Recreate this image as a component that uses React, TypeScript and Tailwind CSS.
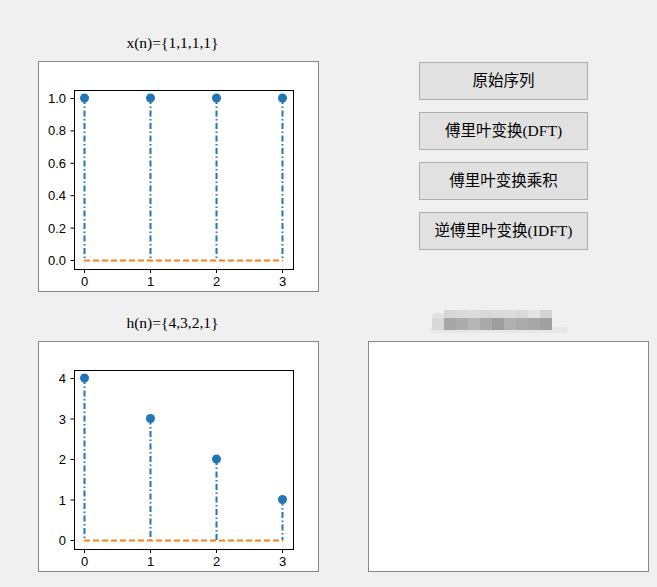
import React from 'react';

type PlotProps = {
    values: number[];
    yTicks: { v: number; label: string }[];
    yMax: number;
};

const BLUE = '#1f77b4';
const ORANGE = '#ff7f0e';

// axes box inside the frame (inner coordinates)
const AX = { l: 35, r: 254, t: 28, b: 207 };
const xPos = (i: number) => 45 + i * 66;

const StemPlot: React.FC<PlotProps> = ({ values, yTicks, yMax }) => {
    const yPos = (v: number) => 198 - (v / yMax) * 162;

    return (
        <svg width="279" height="229" className="block">
            <rect x={AX.l + 0.5} y={AX.t + 0.5} width={AX.r - AX.l} height={AX.b - AX.t} fill="none" stroke="#000" strokeWidth="1" />
            {yTicks.map((t) => (
                <g key={t.label}>
                    <line x1={AX.l - 3.5} x2={AX.l} y1={yPos(t.v) + 0.5} y2={yPos(t.v) + 0.5} stroke="#000" strokeWidth="1" />
                    <text
                        x={AX.l - 8}
                        y={yPos(t.v) + 5}
                        textAnchor="end"
                        fontSize="13"
                        fontFamily="'Liberation Sans', Arial, sans-serif"
                        fill="#000"
                    >
                        {t.label}
                    </text>
                </g>
            ))}
            {values.map((_, i) => (
                <g key={i}>
                    <line x1={xPos(i) + 0.5} x2={xPos(i) + 0.5} y1={AX.b + 0.5} y2={AX.b + 4} stroke="#000" strokeWidth="1" />
                    <text
                        x={xPos(i) + 0.5}
                        y={AX.b + 17}
                        textAnchor="middle"
                        fontSize="13"
                        fontFamily="'Liberation Sans', Arial, sans-serif"
                        fill="#000"
                    >
                        {i}
                    </text>
                </g>
            ))}
            {values.map((v, i) => (
                <line
                    key={'s' + i}
                    x1={xPos(i) + 0.5}
                    x2={xPos(i) + 0.5}
                    y1={yPos(v)}
                    y2={yPos(0)}
                    stroke={BLUE}
                    strokeWidth="2"
                    strokeDasharray="6 2.5 1.5 2.5"
                />
            ))}
            <line x1={xPos(0)} x2={xPos(3) + 1} y1={yPos(0) + 0.5} y2={yPos(0) + 0.5} stroke={ORANGE} strokeWidth="2" strokeDasharray="6 3" />
            {values.map((v, i) => (
                <circle key={'m' + i} cx={xPos(i) + 0.5} cy={yPos(v)} r="4.5" fill={BLUE} />
            ))}
        </svg>
    );
};

const Frame: React.FC<{ children?: React.ReactNode }> = ({ children }) => (
    <div className="w-[281px] h-[231px] border border-[#828790] bg-white">{children}</div>
);

const Title: React.FC<{ text: string }> = ({ text }) => (
    <div className="h-[16px] leading-[16px] pr-[12px] text-center text-[15.5px] text-black font-['Liberation_Serif',serif] mb-[10px]">{text}</div>
);

const buttons = ['原始序列', '傅里叶变换(DFT)', '傅里叶变换乘积', '逆傅里叶变换(IDFT)'];

const topShades = ['#d6d6d6', '#d9d9d9', '#dcdcdc', '#d8d8d8', '#dadada', '#dcdcdc', '#d9d9d9', '#e4e4e4', '#d4d4d4'];
const bottomShades = ['#a6a6a6', '#acacac', '#b6b6b6', '#a9a9a9', '#9e9e9e', '#b0b0b0', '#ababab', '#a7a7a7', '#a0a0a0'];

const BlurredTitle: React.FC = () => (
    <div className="relative h-[20px] w-[140px] ml-[64px] mt-[-5px] mb-[11px]">
        <div className="absolute left-[-2px] top-[17px] w-[138px] h-[6px] rounded-full bg-[#e7e7e9]" />
        <div className="absolute left-0 top-[3px] w-[12px] h-[17px] bg-[#e2e2e2] rounded-l-[4px]" />
        <div className="absolute left-0 top-[8px] w-[12px] h-[12px] bg-[#d8d8d8]" />
        <div className="relative ml-[12px] flex flex-col">
            <div className="flex">
                {topShades.map((c, i) => (
                    <div key={i} className="w-[12px] h-[8px]" style={{ background: c }} />
                ))}
            </div>
            <div className="flex">
                {bottomShades.map((c, i) => (
                    <div key={i} className="w-[12px] h-[12px]" style={{ background: c }} />
                ))}
            </div>
        </div>
    </div>
);

const App: React.FC = () => {
    return (
        <div className="w-[657px] h-[587px] bg-[#f0f0f0] pl-[38px] pt-[35px] overflow-hidden">
            <div className="flex gap-[49px]">
                <div className="flex flex-col">
                    <Title text="x(n)={1,1,1,1}" />
                    <Frame>
                        <StemPlot
                            values={[1, 1, 1, 1]}
                            yMax={1}
                            yTicks={[0, 0.2, 0.4, 0.6, 0.8, 1].map((v) => ({ v, label: v.toFixed(1) }))}
                        />
                    </Frame>
                </div>
                <div className="flex flex-col gap-[12px] pt-[27px] pl-[51px]">
                    {buttons.map((b) => (
                        <button
                            key={b}
                            className="w-[169px] h-[38px] border border-[#adadad] bg-[#e1e1e1] text-black text-[15.5px] font-['Liberation_Serif','Noto_Sans_CJK_SC',serif]"
                        >
                            {b}
                        </button>
                    ))}
                </div>
            </div>
            <div className="flex gap-[49px] mt-[23px]">
                <div className="flex flex-col">
                    <Title text="h(n)={4,3,2,1}" />
                    <Frame>
                        <StemPlot
                            values={[4, 3, 2, 1]}
                            yMax={4}
                            yTicks={[0, 1, 2, 3, 4].map((v) => ({ v, label: String(v) }))}
                        />
                    </Frame>
                </div>
                <div className="flex flex-col">
                    <BlurredTitle />
                    <Frame />
                </div>
            </div>
        </div>
    );
};

export default App;
